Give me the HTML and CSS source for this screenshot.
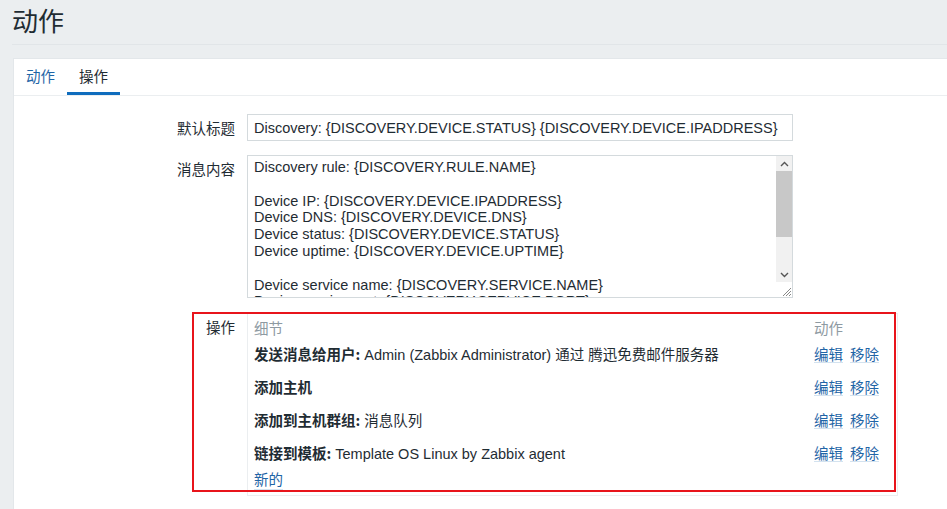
FILE: index.html
```html
<!DOCTYPE html>
<html lang="zh">
<head>
<meta charset="utf-8">
<title>动作</title>
<link rel="stylesheet" href="styles.css">
</head>
<body>
<header class="page-header"><h1 class="page-title">动作</h1></header>
<main class="panel">
  <nav class="tabs">
    <a class="tab">动作</a>
    <a class="tab tab-active">操作</a>
  </nav>
  <div class="form">
    <div class="row">
      <div class="label">默认标题</div>
      <div class="field"><div class="input">Discovery: {DISCOVERY.DEVICE.STATUS} {DISCOVERY.DEVICE.IPADDRESS}</div></div>
    </div>
    <div class="row">
      <div class="label">消息内容</div>
      <div class="field">
        <div class="textarea">
          <div class="ta-text">Discovery rule: {DISCOVERY.RULE.NAME}

Device IP: {DISCOVERY.DEVICE.IPADDRESS}
Device DNS: {DISCOVERY.DEVICE.DNS}
Device status: {DISCOVERY.DEVICE.STATUS}
Device uptime: {DISCOVERY.DEVICE.UPTIME}

Device service name: {DISCOVERY.SERVICE.NAME}
Device service port: {DISCOVERY.SERVICE.PORT}</div>
          <div class="scrollbar">
            <div class="sb-btn"><svg width="9" height="6" viewBox="0 0 9 6"><path d="M1 5 L4.5 1.5 L8 5" fill="none" stroke="#555" stroke-width="1.4"/></svg></div>
            <div class="sb-thumb"></div>
            <div class="sb-track"></div>
            <div class="sb-btn"><svg width="9" height="6" viewBox="0 0 9 6"><path d="M1 1 L4.5 4.5 L8 1" fill="none" stroke="#555" stroke-width="1.4"/></svg></div>
            <div class="sb-corner"><svg width="12" height="12" viewBox="0 0 12 12"><path d="M11 3 L3 11 M11 6 L6 11 M11 9 L9 11" stroke="#888" stroke-width="1"/></svg></div>
          </div>
        </div>
      </div>
    </div>
    <div class="row row-ops">
      <div class="label">操作</div>
      <div class="field">
        <div class="ops">
          <div class="ops-line ops-head"><span class="ops-detail">细节</span><span class="ops-act">动作</span></div>
          <div class="ops-line"><span class="ops-detail"><b>发送消息给用户:</b> Admin (Zabbix Administrator) 通过 腾迅免费邮件服务器</span><span class="ops-act"><a class="link">编辑</a><a class="link">移除</a></span></div>
          <div class="ops-line"><span class="ops-detail"><b>添加主机</b></span><span class="ops-act"><a class="link">编辑</a><a class="link">移除</a></span></div>
          <div class="ops-line"><span class="ops-detail"><b>添加到主机群组:</b> 消息队列</span><span class="ops-act"><a class="link">编辑</a><a class="link">移除</a></span></div>
          <div class="ops-line"><span class="ops-detail"><b>链接到模板:</b> Template OS Linux by Zabbix agent</span><span class="ops-act"><a class="link">编辑</a><a class="link">移除</a></span></div>
          <div class="ops-new"><a class="link">新的</a></div>
        </div>
      </div>
      <div class="highlight"></div>
    </div>
  </div>
</main>
</body>
</html>
```
FILE: styles.css
```css
* { box-sizing: border-box; }
html, body { margin: 0; padding: 0; }
body {
  background: #ebeef0;
  font-family: "Liberation Sans", Arial, "Noto Sans CJK SC", sans-serif;
  font-size: 14.5px;
  color: #1f2c33;
  height: 509px;
  overflow: hidden;
}
.page-header {
  height: 45px;
  margin: 0 0 0 12px;
  border-bottom: 1px solid #e1e5e8;
  display: flex;
  align-items: center;
}
.page-title {
  margin: 0;
  font-family: "Noto Sans CJK SC", sans-serif;
  font-size: 26px;
  font-weight: 400;
  line-height: 1;
  position: relative;
  top: -2px;
}
.panel {
  margin: 13px 0 0 13px;
  background: #fff;
  border: 1px solid #e3e7ea;
  border-right: none;
  height: 460px;
}
.tabs {
  display: flex;
  height: 37px;
  border-bottom: 1px solid #ebeef0;
  font-family: "Noto Sans CJK SC", sans-serif;
}
.tab {
  padding: 0 12px;
  display: flex;
  align-items: center;
  color: #1f65a6;
  font-size: 14.5px;
  border-bottom: 3px solid transparent;
}
.tab-active {
  color: #1f2c33;
  border-bottom-color: #0f6cbd;
}
.form {
  padding-top: 18px;
  display: flex;
  flex-direction: column;
  gap: 14px;
}
.row {
  display: flex;
  gap: 12px;
}
.label {
  width: 221px;
  text-align: right;
  font-family: "Noto Sans CJK SC", sans-serif;
  font-size: 14.5px;
  padding-top: 4px;
  line-height: 20px;
}
.input {
  width: 546px;
  height: 27px;
  border: 1px solid #d4dadd;
  padding: 0 6px;
  display: flex;
  align-items: center;
  white-space: nowrap;
  overflow: hidden;
}
.textarea {
  width: 546px;
  height: 143px;
  border: 1px solid #d4dadd;
  display: flex;
}
.ta-text {
  flex: 1;
  white-space: pre;
  overflow: hidden;
  padding: 3px 6px 0;
  line-height: 16.8px;
}
.scrollbar {
  width: 16px;
  display: flex;
  flex-direction: column;
  background: #f1f1f1;
}
.sb-btn {
  height: 15px;
  display: flex;
  align-items: center;
  justify-content: center;
}
.sb-thumb {
  height: 66px;
  background: #c8c8c8;
}
.sb-track { flex: 1; }
.sb-corner {
  height: 15px;
  background: #fff;
  display: flex;
  align-items: flex-end;
  justify-content: flex-end;
}
.row-ops {
  margin-top: 1px;
  position: relative;
}
.row-ops .label { padding-top: 4px; }
.ops {
  width: 651px;
  height: 183px;
  border: 1px solid #ebeef0;
  padding: 0 0 0 6px;
}
.ops-line {
  display: flex;
  height: 33px;
  align-items: center;
}
.ops-head {
  height: 23px;
  padding-top: 3px;
  color: #8e9aa2;
  font-family: "Noto Sans CJK SC", sans-serif;
}
.ops-detail { width: 560px; white-space: nowrap; }
.ops-detail b { font-weight: 700; font-family: "Noto Sans CJK SC", sans-serif; }
.ops-act {
  display: flex;
  gap: 7px;
  font-family: "Noto Sans CJK SC", sans-serif;
}
.link {
  color: #1f65a6;
  border-bottom: 1px solid #d3e2ef;
  line-height: 17px;
  font-family: "Noto Sans CJK SC", sans-serif;
}
.ops-new { margin-top: 1px; }
.highlight {
  position: absolute;
  left: 178px;
  top: -1px;
  width: 704px;
  height: 180px;
  border: 2px solid #e8141b;
  pointer-events: none;
}
```
